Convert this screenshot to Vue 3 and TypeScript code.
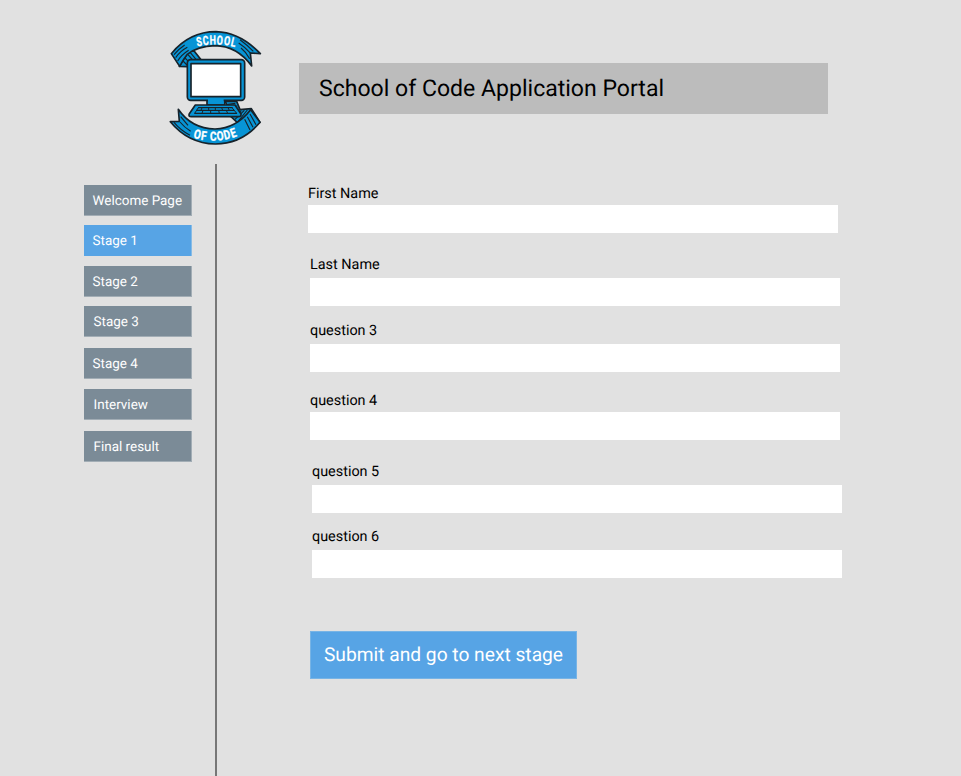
<script setup lang="ts">
interface Stage {
  label: string
  variant: string
}

interface Field {
  id: string
  label: string
}

const stages: Stage[] = [
  { label: 'Welcome Page', variant: 'welcome' },
  { label: 'Stage 1', variant: 'active' },
  { label: 'Stage 2', variant: 'second' },
  { label: 'Stage 3', variant: 'third' },
  { label: 'Stage 4', variant: 'fourth' },
  { label: 'Interview', variant: 'interview' },
  { label: 'Final result', variant: 'final' },
]

const fields: Field[] = [
  { id: 'first-name', label: 'First Name' },
  { id: 'last-name', label: 'Last Name' },
  { id: 'question-3', label: 'question 3' },
  { id: 'question-4', label: 'question 4' },
  { id: 'question-5', label: 'question 5' },
  { id: 'question-6', label: 'question 6' },
]
</script>

<template>
  <div class="portal">
    <header class="top">
      <svg class="logo" viewBox="0 0 330 384" role="img">
        <defs>
          <path id="arc-top" d="M70 88 Q165 46 270 90" />
          <path id="arc-bottom" d="M62 332 Q165 385 272 323" />
        </defs>
        <g stroke="#17232b" stroke-width="5" stroke-linejoin="round" fill="#0794d6">
          <!-- upper ribbon -->
          <path d="M58 133 L82 94 L100 84 L122 112 L86 116 L82 134 Z" />
          <path d="M34 95 Q88 29 168 29 Q240 31 301 95 L271 93 L275 132 Q231 72 165 71 Q112 73 82 97 Q70 112 59 133 Z" />
          <path d="M42 98 Q56 81 74 69 M47 107 Q61 87 82 76 M53 117 Q65 98 86 85 M84 98 L98 114 M91 92 L108 112 M75 108 L86 119 M69 117 L81 129 M240 53 Q262 69 280 88 M236 63 Q256 76 272 94 M243 78 Q259 91 269 110" fill="none" stroke-width="3.5" />
          <!-- lower ribbon -->
          <path d="M196 238 L230 238 L240 263 L274 260 L300 301 Q278 318 262 330 L213 284 Z" />
          <path d="M31 299 L58 298 L55 262 Q94 320 165 321 Q228 319 272 263 L300 301 Q246 366 166 366 Q84 364 31 299 Z" />
          <path d="M199 248 L226 244 M204 257 L232 252 M218 272 L236 262 M218 283 L244 266 M225 292 L253 265 M232 301 L262 264 M270 276 L288 308 M262 284 L279 316 M254 292 L270 324 M42 301 Q60 323 90 340 M60 300 Q74 317 92 328 M62 284 L84 310" fill="none" stroke-width="3.5" />
          <!-- monitor and stand -->
          <path d="M141 232 H194 V249 H141 Z" />
          <rect x="82" y="113" width="172" height="122" rx="10" />
          <rect x="93" y="125" width="149" height="99" fill="#fff" />
          <!-- keyboard -->
          <path d="M106 249 H225 L243 276 Q244 284 235 284 H94 Q84 284 88 275 Z" />
          <path d="M114 257 H218 M109 265 H223 M103 274 H231" fill="none" stroke-width="3.5" />
          <path d="M126 257 L123 265 M146 257 V265 M166 257 V265 M185 257 L188 265 M204 257 L208 265 M115 257 L104 274 M129 265 L126 274 M152 265 V274 M176 265 L178 274 M199 265 L203 274 M216 257 L230 274" fill="none" stroke-width="3" />
        </g>
        <path d="M144 229 H191 V246 H144 Z" fill="#0794d6" />
        <g class="logo-text" fill="#fff" stroke="#fff" stroke-width="1">
          <text><textPath href="#arc-top" startOffset="49.5%" text-anchor="middle" textLength="116" lengthAdjust="spacingAndGlyphs">SCHOOL</textPath></text>
          <text><textPath href="#arc-bottom" startOffset="49.5%" text-anchor="middle" textLength="138" lengthAdjust="spacingAndGlyphs">OF CODE</textPath></text>
        </g>
      </svg>
      <h1 class="title">School of Code Application Portal</h1>
    </header>
    <div class="body">
      <nav class="stages">
        <a v-for="stage in stages" :key="stage.label" class="stage" :class="stage.variant">{{ stage.label }}</a>
      </nav>
      <form class="form" @submit.prevent>
        <div v-for="field in fields" :key="field.id" class="field" :class="field.id">
          <label :for="field.id">{{ field.label }}</label>
          <input :id="field.id" type="text" />
        </div>
        <button class="submit" type="submit">Submit and go to next stage</button>
      </form>
    </div>
  </div>
</template>

<style>
body {
  margin: 0;
  background: #e1e1e1;
}
</style>

<style scoped>
.portal {
  box-sizing: border-box;
  display: flex;
  flex-direction: column;
  height: 776px;
  overflow: hidden;
  background: #e1e1e1;
  color: #000;
  font-family: Roboto, sans-serif;
  text-rendering: geometricPrecision;
}

.top {
  box-sizing: border-box;
  display: flex;
  flex: none;
  align-items: flex-start;
  height: 164px;
  padding: 22px 0 0 160px;
}

.logo {
  width: 110px;
  height: 128px;
}

.logo-text {
  font-family: Roboto, sans-serif;
  font-size: 38px;
  font-weight: 700;
  letter-spacing: 3px;
}

.title {
  box-sizing: border-box;
  width: 529px;
  height: 51px;
  margin: 41px 0 0 29px;
  padding-left: 20px;
  background: #bcbcbc;
  font-size: 23.05px;
  font-weight: 400;
  line-height: 51px;
  white-space: nowrap;
}

.body {
  display: flex;
  flex: 1;
}

.stages {
  box-sizing: border-box;
  display: flex;
  flex-direction: column;
  width: 217px;
  padding: 21px 0 0 84px;
  border-right: 2px solid #777;
}

.stage {
  box-sizing: border-box;
  width: 108px;
  height: 31px;
  margin-bottom: 9px;
  padding-left: 8.6px;
  background: #7b8b97;
  box-shadow: inset -1px -1px #a2adb5;
  color: #fff;
  font-size: 13.45px;
  line-height: 33px;
  white-space: nowrap;
}

.active {
  margin-bottom: 10px;
  background: #57a4e5;
  box-shadow: inset -1px 0 #86bbe6;
}

.third {
  margin-bottom: 11px;
}

.fourth {
  margin-bottom: 10px;
}

.interview {
  margin-bottom: 11px;
}

.third,
.interview,
.final {
  padding-left: 9.6px;
}

.form {
  padding: 20px 0 0 91px;
}

.field {
  display: flex;
  flex-direction: column;
  width: 530px;
}

.field label {
  height: 21px;
  font-size: 14.4px;
  line-height: 21px;
  white-space: nowrap;
}

.field.first-name label,
.field.last-name label {
  line-height: 20px;
}

.field input {
  box-sizing: border-box;
  width: 530px;
  height: 28px;
  padding: 0 8px;
  border: 0;
  background: #fff;
  font: inherit;
}

.last-name,
.question-3,
.question-4,
.submit {
  margin-left: 2px;
}

.question-5,
.question-6 {
  margin-left: 4px;
}

.last-name {
  margin-top: 22px;
}

.field.last-name label {
  height: 23px;
}

.question-3 {
  margin-top: 14px;
}

.question-3 label,
.question-5 label,
.question-6 label {
  height: 24px;
}

.question-4 {
  margin-top: 18px;
}

.question-4 label {
  height: 22px;
}

.question-5 {
  margin-top: 21px;
}

.question-6 {
  margin-top: 13px;
}

.submit {
  width: 267px;
  height: 48px;
  margin-top: 53px;
  padding: 0 0 2px;
  border: 0;
  background: #57a4e5;
  box-shadow: inset 0 0 0 1px #78b4e5;
  color: #fff;
  font: 19.2px Roboto, sans-serif;
  text-rendering: inherit;
  white-space: nowrap;
}
</style>
